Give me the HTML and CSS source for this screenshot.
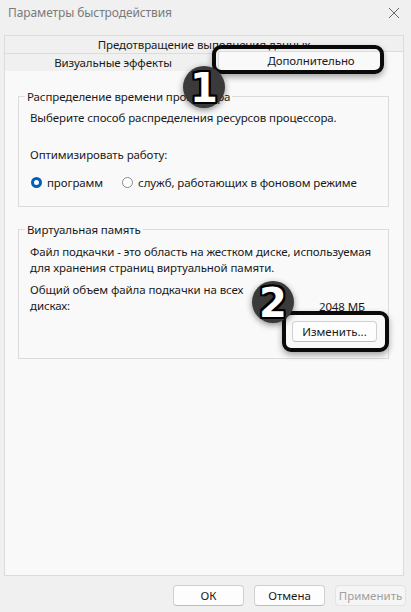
FILE: index.html
```html
<!DOCTYPE html>
<html lang="ru">
<head>
  <meta charset="UTF-8">
  <title>Параметры быстродействия</title>
  <link rel="stylesheet" href="styles.css">
</head>
<body>
  <div class="titlebar">
    <span class="title">Параметры быстродействия</span>
    <svg class="close" width="12" height="12" viewBox="0 0 12 12">
      <path d="M1 1 L11 11 M11 1 L1 11" stroke="#6a6a6a" stroke-width="1" fill="none"/>
    </svg>
  </div>

  <div class="dialog">
    <div class="tab-row top">
      <div class="tab wide">Предотвращение выполнения данных</div>
    </div>
    <div class="tab-row">
      <div class="tab half">Визуальные эффекты</div>
      <div class="tab half active">Дополнительно</div>
    </div>

    <div class="panel">
      <fieldset class="group cpu">
        <legend>Распределение времени процессора</legend>
        <p class="line intro">Выберите способ распределения ресурсов процессора.</p>
        <p class="line optimize">Оптимизировать работу:</p>
        <div class="radios">
          <label class="radio"><span class="dot checked"></span>программ</label>
          <label class="radio"><span class="dot"></span>служб, работающих в фоновом режиме</label>
        </div>
      </fieldset>

      <fieldset class="group memory">
        <legend>Виртуальная память</legend>
        <p class="line intro">Файл подкачки - это область на жестком диске, используемая<br>для хранения страниц виртуальной памяти.</p>
        <div class="total">
          <p class="line">Общий объем файла подкачки на всех<br>дисках:</p>
          <span class="size">2048 МБ</span>
        </div>
        <div class="change-row">
          <button class="btn change">Изменить...</button>
        </div>
      </fieldset>
    </div>

    <div class="actions">
      <button class="btn">ОК</button>
      <button class="btn">Отмена</button>
      <button class="btn disabled">Применить</button>
    </div>
  </div>

  <div class="mark mark-tab"></div>
  <div class="badge badge-1">1</div>
  <div class="mark mark-btn"></div>
  <div class="badge badge-2">2</div>
</body>
</html>
```

FILE: styles.css
```css
body {
  margin: 0;
  background: #f0f0f0;
  font-family: "Noto Sans", "Open Sans", sans-serif;
  font-size: 11.5px;
  letter-spacing: -0.1px;
  color: #1a1a1a;
  position: relative;
  height: 612px;
  overflow: hidden;
}
.titlebar {
  height: 24px;
  display: flex;
  align-items: center;
  justify-content: space-between;
  padding: 0 11px 0 8px;
  color: #7a7a7a;
  font-size: 12px;
}
.close { margin-top: 1px; }

.dialog {
  padding: 11px 7px 0 4px;
}
.tab-row {
  display: flex;
  white-space: nowrap;
}
.tab {
  text-align: center;
  background: #f0f0f0;
  border: 1px solid #dcdcdc;
  border-bottom: none;
  box-sizing: border-box;
}
.tab.wide { width: 100%; height: 18px; line-height: 17px; }
.tab.half { width: 212px; height: 18px; line-height: 18px; padding-left: 6px; }
.tab.active {
  flex: 1;
  width: auto;
  background: #f9f9f9;
  margin-top: -2px;
  height: 20px;
  line-height: 18px;
  padding-left: 0;
  margin-left: 2px;
}
.panel {
  background: #f9f9f9;
  border: 1px solid #dcdcdc;
  border-top: none;
  height: 505px;
  padding: 18px 14px 0 13px;
  box-sizing: border-box;
}
.group {
  margin: 0;
  min-width: 0;
  border: 1px solid #dcdcdc;
  padding: 0 8px 0 11px;
  box-sizing: border-box;
  white-space: nowrap;
}
.group legend {
  padding: 0 2px;
  margin-left: -5px;
}
.group.cpu { height: 118px; }
.group.memory { height: 137px; margin-top: 15px; }
.line { margin: 0; line-height: 16px; }
.cpu .intro { margin-top: 6px; }
.cpu .optimize { margin-top: 21px; }
.radios {
  display: flex;
  gap: 19px;
  margin-top: 12px;
  margin-left: 1px;
}
.radio {
  display: flex;
  align-items: center;
  gap: 5px;
}
.dot {
  width: 11px;
  height: 11px;
  border-radius: 50%;
  border: 1px solid #8a8a8a;
  box-sizing: border-box;
  background: #fff;
}
.dot.checked {
  border: 3px solid #005fb8;
  background: #fff;
}
.memory .intro { margin-top: 7px; }
.total {
  display: flex;
  align-items: flex-end;
  justify-content: space-between;
  margin-top: 6px;
  padding-right: 15px;
}
.change-row {
  display: flex;
  justify-content: flex-end;
  margin-top: 7px;
}
.btn {
  font: inherit;
  color: #1a1a1a;
  background: #fdfdfd;
  border: 1px solid #d0d0d0;
  border-bottom-color: #bdbdbd;
  border-radius: 4px;
  height: 21px;
  width: 71px;
  padding: 0;
}
.btn.change { width: 85px; margin-right: 3px; }
.btn.disabled {
  color: #a0a0a0;
  background: #f5f5f5;
  border-color: #e3e3e3;
}
.actions {
  display: flex;
  justify-content: flex-end;
  gap: 10px;
  margin-top: 9px;
  margin-right: -2px;
}

/* annotation overlays */
.mark {
  position: absolute;
  border: 4px solid #0a0a0a;
  border-radius: 9px;
  box-shadow: 0 3px 6px rgba(0,0,0,.35);
  box-sizing: border-box;
}
.mark-tab { left: 212px; top: 45px; width: 172px; height: 29px; }
.mark-btn { left: 282px; top: 311px; width: 107px; height: 41px; }
.badge {
  position: absolute;
  width: 42px;
  height: 42px;
  border-radius: 50%;
  background: #3a3a3a;
  box-shadow: 0 2px 6px rgba(0,0,0,.45);
  color: #fff;
  font-family: "DejaVu Sans", sans-serif;
  font-weight: bold;
  font-size: 40px;
  letter-spacing: 0;
  line-height: 44px;
  text-align: center;
  text-shadow:
    -2px 0 #000, 2px 0 #000, 0 -2px #000, 0 2px #000,
    -2px -2px #000, 2px 2px #000, -2px 2px #000, 2px -2px #000;
}
.badge-1 { left: 183px; top: 66px; }
.badge-2 { left: 252px; top: 281px; }
```
